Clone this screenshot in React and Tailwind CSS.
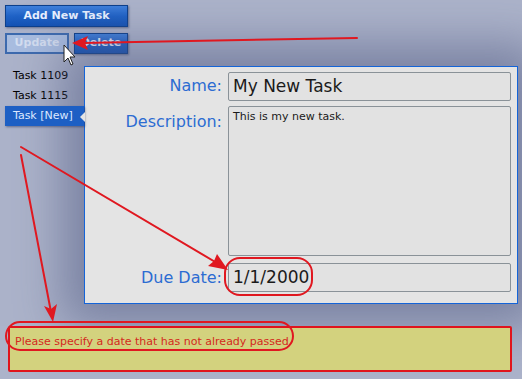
import React from "react";

const font = { fontFamily: '"DejaVu Sans", Verdana, sans-serif' };

function BlueButton({ children, className = "" }) {
  return (
    <div
      className={`flex items-center justify-center border border-[#0c3f8c] bg-gradient-to-b from-[#3f80dc] via-[#1f62c6] to-[#1452b4] text-[11px] font-bold text-[#e8f0ff] shadow-[1px_1px_2px_rgba(30,40,80,0.5)] ${className}`}
    >
      {children}
    </div>
  );
}

export default function App() {
  return (
    <div
      className="relative h-[379px] w-[522px] overflow-hidden bg-[#acb3ca]"
      style={font}
    >
      <div className="flex flex-col pl-[5px] pt-[5px]">
        <BlueButton className="h-[22px] w-[123px]">Add New Task</BlueButton>
        <div className="mt-[6px] flex gap-[5px]">
          <div className="flex h-[21px] w-[64px] items-center justify-center border-2 border-[#3d6aae] bg-[#a9bde0] text-[11px] font-bold text-[#d4def0]">
            Update
          </div>
          <BlueButton className="h-[21px] w-[54px]">Delete</BlueButton>
        </div>
        <div className="mt-[12px] flex">
          <div className="flex w-[79px] flex-col text-[11px] text-black">
            <div className="flex h-[20px] items-center pl-[8px]">Task 1109</div>
            <div className="flex h-[20px] items-center pl-[8px]">Task 1115</div>
            <div className="relative flex h-[20px] items-center bg-[#1d5fc4] pl-[8px] text-[#dce8ff] shadow-[1px_1px_2px_rgba(30,40,80,0.5)]">
              Task [New]
              <div className="absolute right-[-1px] top-[6px] h-0 w-0 border-y-[5px] border-r-[5px] border-y-transparent border-r-[#e4e4e4]" />
            </div>
          </div>
          <div className="flex h-[238px] w-[434px] flex-col gap-0 border border-[#1464d8] bg-[#e4e4e4] pr-[6px] pt-[5px] shadow-[0_0_45px_22px_rgba(80,90,130,0.55)]">
            <div className="flex">
              <div className="w-[143px] pr-[6px] pt-[2px] text-right text-[16px] text-[#2c6cd2]">Name:</div>
              <div className="flex h-[29px] flex-1 items-center rounded-[2px] border border-[#8a9298] bg-[#e2e2e2] pl-[4px] text-[17px] text-[#1a1a1a]">
                My New Task
              </div>
            </div>
            <div className="mt-[5px] flex">
              <div className="w-[143px] pr-[6px] pt-[4px] text-right text-[16px] text-[#2c6cd2]">Description:</div>
              <div className="h-[150px] flex-1 rounded-[2px] border border-[#8a9298] bg-[#e2e2e2] pl-[4px] pt-[2px] text-[11px] text-[#1a1a1a]">
                This is my new task.
              </div>
            </div>
            <div className="mt-[7px] flex">
              <div className="w-[143px] pr-[6px] pt-[3px] text-right text-[16px] text-[#2c6cd2]">Due Date:</div>
              <div className="flex h-[29px] flex-1 items-center rounded-[2px] border border-[#8a9298] bg-[#e2e2e2] pl-[4px] text-[17px] text-[#1a1a1a]">
                1/1/2000
              </div>
            </div>
          </div>
        </div>
        <div className="ml-[3px] mt-[22px] h-[46px] w-[504px] rounded-[2px] border-2 border-[#e0141c] bg-[#d3d27e] pl-[5px] pt-[6px] text-[11px] text-[#d42a20]">
          Please specify a date that has not already passed
        </div>
      </div>

      <svg className="pointer-events-none absolute left-0 top-0" width="522" height="379">
        <g stroke="#e01820" strokeWidth="2" fill="none" strokeLinecap="round">
          <line x1="357" y1="38" x2="82" y2="43" />
          <line x1="21" y1="147" x2="222" y2="266" />
          <line x1="21" y1="155" x2="51" y2="312" />
          <rect x="225" y="258" width="87" height="37" rx="15" />
          <rect x="6" y="322" width="287" height="28" rx="14" />
        </g>
        <g fill="#e01820">
          <polygon points="72,43 88,36 85,43 88,50" />
          <polygon points="228,270 208,266 214,261 217,254" />
          <polygon points="53,322 44,306 51,309 57,304" />
        </g>
        <path
          d="M64 45 L64 62 L68 58 L71 65 L73 64 L70 57 L75 57 Z"
          fill="#ffffff"
          stroke="#222"
          strokeWidth="1"
        />
      </svg>
    </div>
  );
}
